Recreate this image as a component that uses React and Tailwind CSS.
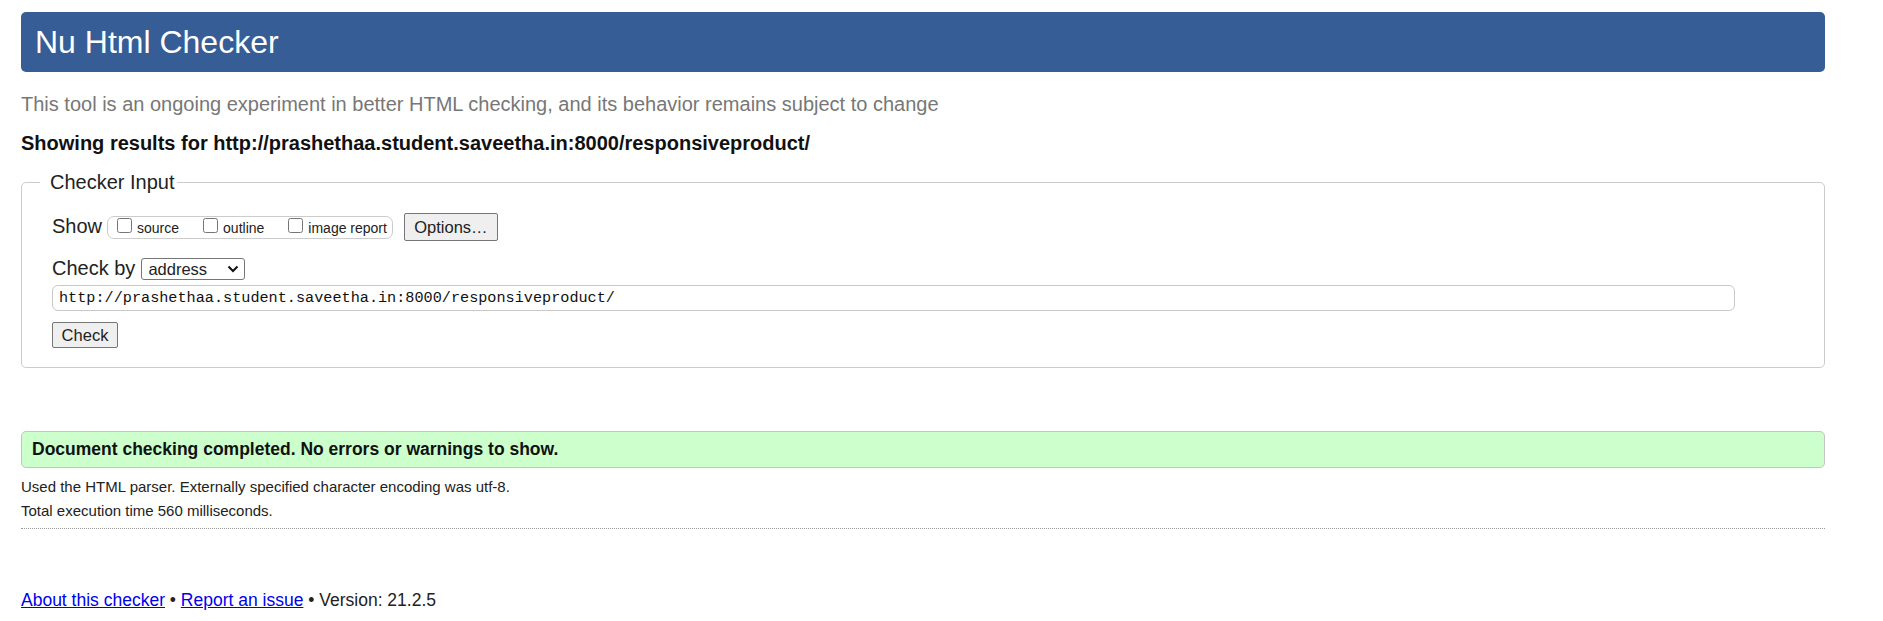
export default function App() {
  return (
    <div className="min-h-screen bg-white font-['Liberation_Sans',Arial,sans-serif] text-[#222]">
      <div className="ml-[21px] w-[1804px] pt-[12px]">
        <h1 className="h-[60px] rounded-[5px] bg-[#365d95] px-[14px] text-[32px] leading-[60px] text-white">
          Nu Html Checker
        </h1>

        <p className="mt-[20px] text-[20px] leading-[24px] text-[#777]">
          This tool is an ongoing experiment in better HTML checking, and its behavior remains subject to change
        </p>

        <p className="mt-[15px] text-[20px] font-bold leading-[24px] text-[#111]">
          Showing results for http://prashethaa.student.saveetha.in:8000/responsiveproduct/
        </p>

        <fieldset className="mt-[15px] rounded-[5px] border border-[#cccccc] pb-[19px] pl-[30px] pr-[30px] pt-[19px]">
          <legend className="-ml-[12px] pl-[10px] pr-[2px] text-[20px] leading-[24px]">Checker Input</legend>

          <div className="flex h-[28px] items-center">
            <span className="mb-[3px] text-[20px] leading-[24px]">Show</span>
            <div className="ml-[5px] flex h-[23px] items-center rounded-[7px] border border-[#cccccc] pl-[9px] pr-[5px] text-[14px] leading-[16px]">
              <label className="flex items-baseline">
                <input type="checkbox" className="m-0 h-[15px] w-[15px]" />
                <span className="ml-[5px]">source</span>
              </label>
              <label className="ml-[24px] flex items-baseline">
                <input type="checkbox" className="m-0 h-[15px] w-[15px]" />
                <span className="ml-[5px]">outline</span>
              </label>
              <label className="ml-[24px] flex items-baseline">
                <input type="checkbox" className="m-0 h-[15px] w-[15px]" />
                <span className="ml-[5px]">image report</span>
              </label>
            </div>
            <button className="ml-[11px] flex h-[28px] w-[94px] items-center justify-center rounded-[2px] border border-[#767676] bg-[#efefef] text-[16.5px]">
              Options…
            </button>
          </div>

          <div className="mt-[17px] flex h-[22px] items-center">
            <span className="mb-[2px] text-[20px] leading-[24px]">Check by</span>
            <div className="ml-[6px] flex h-[22px] w-[104px] items-center justify-between rounded-[3px] border border-[#767676] bg-white pl-[6px] pr-[4px] text-[16.5px] leading-[20px]">
              <span>address</span>
              <svg width="12" height="8" viewBox="0 0 12 8" className="mr-[1px]">
                <polyline points="1.5,1.5 6,6 10.5,1.5" fill="none" stroke="#111" strokeWidth="2" />
              </svg>
            </div>
          </div>

          <div className="mt-[5px] flex h-[26px] w-[1683px] items-center rounded-[6px] border border-[#c8c8c8] pl-[6px] font-['Liberation_Mono','DejaVu_Sans_Mono',monospace] text-[15.2px] text-[#111]">
            http://prashethaa.student.saveetha.in:8000/responsiveproduct/
          </div>

          <button className="mt-[11px] flex h-[26px] w-[66px] items-center justify-center rounded-[2px] border border-[#767676] bg-[#efefef] text-[16.5px]">
            Check
          </button>
        </fieldset>

        <div className="mt-[63px] h-[37px] rounded-[5px] border border-[#c4c4c4] bg-[#ccffcc] pl-[10px] text-[17.5px] font-bold leading-[35px] text-[#111]">
          Document checking completed. No errors or warnings to show.
        </div>

        <p className="mt-[7px] text-[15px] leading-[24px]">
          Used the HTML parser. Externally specified character encoding was utf-8.
        </p>
        <p className="text-[15px] leading-[24px]">Total execution time 560 milliseconds.</p>

        <div className="mt-[5px] border-t border-dotted border-[#999]" />

        <p className="mt-[59px] text-[17.5px] leading-[24px]">
          <a href="#" className="text-[#0000ee] underline">About this checker</a>
          {' • '}
          <a href="#" className="text-[#0000ee] underline">Report an issue</a>
          {' • Version: 21.2.5'}
        </p>
      </div>
    </div>
  );
}
